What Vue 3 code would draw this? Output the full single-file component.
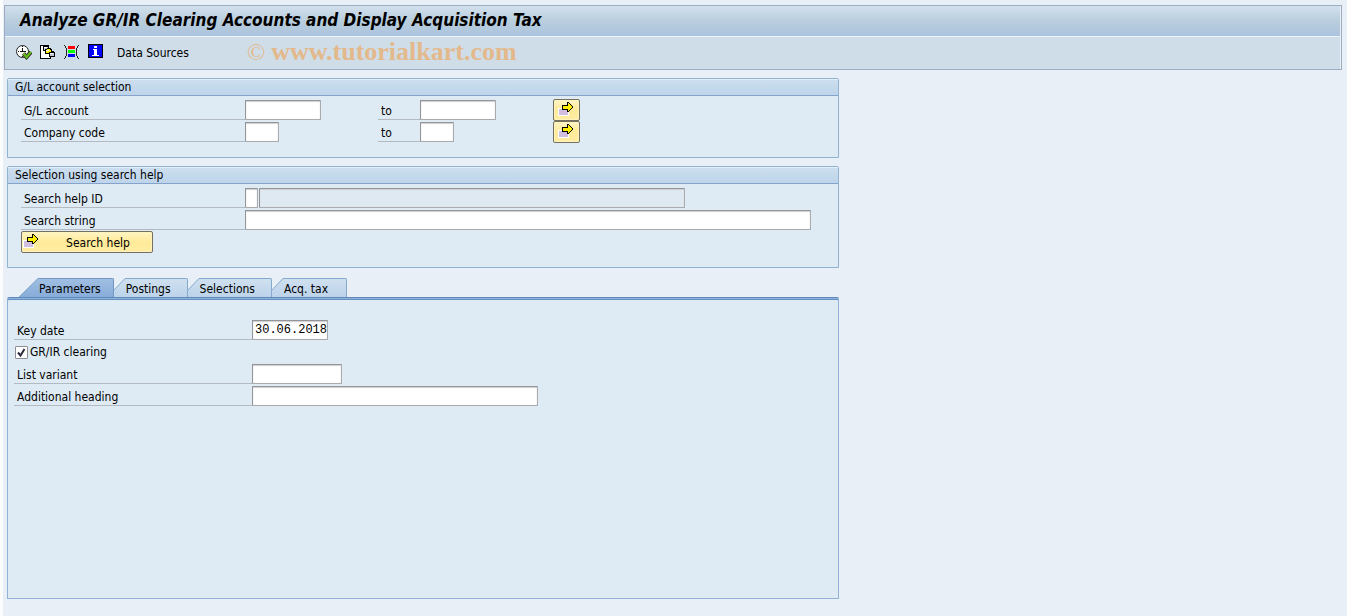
<script setup>
import { ref } from 'vue'

const ranges = [
  { id: 'account', label: 'G/L account', size: 'w-date' },
  { id: 'company', label: 'Company code', size: 'w-code' },
]
const tabs = ['Parameters', 'Postings', 'Selections', 'Acq. tax']
const active = ref('Parameters')
const keyDate = ref('30.06.2018')
const clearing = ref(true)
</script>

<template>
  <main class="screen">
    <header class="header">
      <h1 class="title">Analyze GR/IR Clearing Accounts and Display Acquisition Tax</h1>
      <div class="toolbar">
        <button class="tool" type="button" aria-label="Execute">
          <svg viewBox="0 0 16 16">
            <circle cx="6.5" cy="7.5" r="6" fill="#fff" stroke="#222" />
            <path d="M6.5 4v4M4 7.5h6M6.5 2v1M2 7.5h1M6.5 12v1" stroke="#111" fill="none" />
            <path d="M7.5 9.5l3 3.5 4.5-5" fill="none" stroke="#222" stroke-width="4" />
            <path d="M7.5 9.5l3 3.5 4.5-5" fill="none" stroke="#66b71e" stroke-width="2.5" />
          </svg>
        </button>
        <button class="tool" type="button" aria-label="Get variant">
          <svg viewBox="0 0 16 16" shape-rendering="crispEdges">
            <path d="M0 1h9v3h2v11H0z" fill="#000" />
            <path d="M1 2h8v2h1v10H1z" fill="#fff" />
            <path d="M3 2h2V1h3v1h1v5H3z" fill="#000" />
            <path d="M4 3h4v3H4z" fill="#bec6d2" />
            <path d="M5 5h2V4h4v1h1v5H5z" fill="#000" />
            <path d="M6 6h5v3H6zM7 5h3v1H7z" fill="#ffed00" />
            <path d="M9 8h2V7h3v1h1v5H9z" fill="#000" />
            <path d="M10 9h4v3h-4z" fill="#bec6d2" />
            <path d="M4 3h3v1H4zM6 6h3v1H6zM10 9h3v1h-3z" fill="#fff" />
          </svg>
        </button>
        <button class="tool" type="button" aria-label="Dynamic selections">
          <svg viewBox="0 0 16 16" shape-rendering="crispEdges">
            <path d="M4 2h7v3H4z" fill="#f00" />
            <path d="M4 6h7v3H4z" fill="#0f0" />
            <path d="M4 10h7v3H4z" fill="#00f" />
            <path d="M0 1h1v1H0zM1 2h1v2H1zM2 4h1v8H2zM1 12h1v2H1zM0 14h1v1H0zM14 1h1v1h-1zM13 2h1v2h-1zM12 4h1v8h-1zM13 12h1v2h-1zM14 14h1v1h-1z" fill="#222" />
          </svg>
        </button>
        <button class="tool" type="button" aria-label="Information">
          <svg viewBox="0 0 16 16" shape-rendering="crispEdges">
            <path d="M0 0h15v14H0z" fill="#000" />
            <path d="M1 1h13v12H1z" fill="#00f" />
            <path d="M6 2h3v2H6zM5 5h4v6h2v1H4v-1h2V6H5z" fill="#fff" />
          </svg>
        </button>
        <button class="sources" type="button">Data Sources</button>
        <span class="watermark">© <b>www.tutorialkart.com</b></span>
      </div>
    </header>

    <section class="group">
      <h2 class="group-title">G/L account selection</h2>
      <div v-for="r in ranges" :key="r.id" class="row range">
        <label class="label" :for="r.id">{{ r.label }}</label>
        <input :id="r.id" class="field" :class="r.size" type="text" />
        <label class="label" :for="r.id + '-to'">to</label>
        <input :id="r.id + '-to'" class="field" :class="r.size" type="text" />
        <button class="push multi" type="button" :aria-label="'Multiple selection for ' + r.label">
          <svg class="arrow" viewBox="0 0 16 16" shape-rendering="crispEdges">
            <path d="M0 7h11v8H0z" fill="#fff" />
            <path d="M1 8h9v6H1z" fill="#d2bede" />
            <path d="M4 4h5V1h2v1h1v1h1v1h1v1h1v2h-1v1h-1v1h-1v1h-1v1H9V9H4z" fill="#000" />
            <path d="M5 5h5V2h1v1h1v1h1v1h1v2h-1v1h-1v1h-1v1h-1V8H5z" fill="#ffed00" />
          </svg>
        </button>
      </div>
    </section>

    <section class="group">
      <h2 class="group-title">Selection using search help</h2>
      <div class="row">
        <label class="label" for="help-id">Search help ID</label>
        <input id="help-id" class="field w-one" type="text" />
        <input class="field w-desc" type="text" readonly aria-label="Search help description" />
      </div>
      <div class="row">
        <label class="label" for="string">Search string</label>
        <input id="string" class="field w-string" type="text" />
      </div>
      <button class="push help" type="button">
        <svg class="arrow" viewBox="0 0 16 16" shape-rendering="crispEdges">
          <path d="M0 7h11v8H0z" fill="#fff" />
          <path d="M1 8h9v6H1z" fill="#d2bede" />
          <path d="M4 4h5V1h2v1h1v1h1v1h1v1h1v2h-1v1h-1v1h-1v1h-1v1H9V9H4z" fill="#000" />
          <path d="M5 5h5V2h1v1h1v1h1v1h1v2h-1v1h-1v1h-1v1h-1V8H5z" fill="#ffed00" />
        </svg>
        <span class="help-text">Search help</span>
      </button>
    </section>

    <section class="tabstrip">
      <div class="tabs" role="tablist">
        <button
          v-for="t in tabs"
          :key="t"
          class="tab"
          :class="{ active: t === active }"
          type="button"
          role="tab"
          :aria-selected="t === active"
          @click="active = t"
        >
          <svg v-if="t === active" class="slope" viewBox="0 0 20 19">
            <defs>
              <linearGradient id="tab-on" x2="0" y2="1">
                <stop stop-color="#a0bee2" />
                <stop offset="1" stop-color="#87add9" />
              </linearGradient>
            </defs>
            <path d="M0 19L19 0h1v19z" fill="url(#tab-on)" />
            <path class="slope-line" d="M0 19L19 .5h1" />
          </svg>
          <svg v-else class="slope" viewBox="0 0 12 19">
            <defs>
              <linearGradient id="tab-off" x2="0" y2="1">
                <stop stop-color="#cfe0ef" />
                <stop offset="1" stop-color="#bcd3ea" />
              </linearGradient>
            </defs>
            <path d="M0 12L11 0h1v19H0z" fill="url(#tab-off)" />
            <path class="slope-line" d="M0 12L11 .5h1" />
          </svg>
          <span class="tab-text">{{ t }}</span>
        </button>
      </div>
      <div class="panel" role="tabpanel">
        <div class="row">
          <label class="label" for="key-date">Key date</label>
          <input id="key-date" v-model="keyDate" class="field w-date" type="text" />
        </div>
        <div class="row">
          <span class="check">
            <span class="box">
              <input id="clearing" v-model="clearing" type="checkbox" />
              <svg v-if="clearing" class="mark" viewBox="0 0 13 13">
                <path d="M3 6.5l2.500 3L9.500 3" fill="none" stroke="#2b2b3c" stroke-width="2" />
              </svg>
            </span>
            <label for="clearing">GR/IR clearing</label>
          </span>
        </div>
        <div class="row">
          <label class="label" for="variant">List variant</label>
          <input id="variant" class="field w-variant" type="text" />
        </div>
        <div class="row">
          <label class="label" for="heading">Additional heading</label>
          <input id="heading" class="field w-heading" type="text" />
        </div>
      </div>
    </section>
  </main>
</template>

<style>
body {
  margin: 0;
  background: #e8eff7;
}
</style>

<style scoped>
.screen,
.screen * {
  box-sizing: border-box;
}
.screen {
  min-height: 100vh;
  padding: 5px 5px 17px 4px;
  border-left: 3px solid #fbfcfe;
  background: #e8eff7;
  color: #000;
  font: 12px/18px "DejaVu Sans Condensed", "DejaVu Sans", sans-serif;
}
.screen button {
  font: inherit;
  color: inherit;
  cursor: pointer;
}
.header {
  margin: 0 0 8px -3px;
  border: 1px solid #9eacc2;
  box-shadow: inset -1px 1px #e8eff6;
  background: #cfdde8;
}
.title {
  height: 31px;
  margin: 0 1px 0 0;
  padding: 0 15px;
  border-bottom: 1px solid #edf3f8;
  background: linear-gradient(#d2e0ed, #b9cedd 50%, #abc3de);
  font-size: 17px;
  line-height: 28px;
  font-style: italic;
  font-weight: bold;
  white-space: nowrap;
}
.toolbar {
  display: flex;
  align-items: center;
  height: 32px;
  padding: 0 0 2px 11px;
}
.tool {
  width: 16px;
  height: 16px;
  margin-right: 8px;
  padding: 0;
  border: 0;
  background: none;
}
.tool svg {
  display: block;
  width: 16px;
  height: 16px;
}
.screen .sources {
  margin-left: 5px;
  padding: 2px 0 0;
  border: 0;
  background: none;
  line-height: 20px;
}
.watermark {
  margin-left: 58px;
  color: #e3b98c;
  font: 24px/28px "Liberation Serif", serif;
  white-space: nowrap;
}
.watermark b {
  font-size: 26px;
}
.group {
  max-width: 832px;
  margin-bottom: 8px;
  padding: 0 0 14px 13px;
  border: 1px solid #8fb2d0;
  border-radius: 2px 2px 0 0;
  background: #deebf5;
}
.group-title {
  height: 17px;
  margin: 0 0 3px -13px;
  padding-left: 7px;
  border-bottom: 1px solid #86a4cb;
  box-shadow: inset 0 1px #e4f0f9;
  background: linear-gradient(#cddff0, #bed4ea);
  font-size: 12px;
  font-weight: normal;
  line-height: 16px;
}
.row {
  display: flex;
  height: 22px;
  padding: 1px 0;
}
.range {
  display: grid;
  grid-template-columns: 224px 133px 42px 133px 27px;
  padding: 0;
  align-items: center;
}
.label {
  flex: none;
  width: 224px;
  height: 20px;
  padding: 1px 3px 0;
  border-bottom: 1px solid #b3bac1;
  line-height: 20px;
}
.range .label {
  width: auto;
}
.field {
  flex: none;
  height: 20px;
  padding: 0 0 0 2px;
  border: 1px solid #a9abae;
  border-top-color: #939598;
  border-left-color: #939598;
  border-radius: 1px;
  box-shadow: inset 0 1px 1px #cfcfd2, inset 0 0 1px #d5d5d8;
  background: #fff;
  color: #000;
  font: 12px "Liberation Mono", "DejaVu Sans Mono", monospace;
  outline: 0;
}
.field:read-only {
  background: #dfe9f2;
}
.w-one {
  width: 13px;
  margin-right: 1px;
}
.w-code {
  width: 34px;
}
.w-date {
  width: 76px;
}
.w-variant {
  width: 90px;
}
.w-heading {
  width: 286px;
}
.w-desc {
  width: 426px;
}
.w-string {
  width: 566px;
}
.push {
  display: flex;
  height: 22px;
  padding: 0;
  border: 1px solid #75705f;
  border-radius: 2px;
  box-shadow: inset 0 0 0 1px #fff3bd;
  background: linear-gradient(#fff5c5, #ffea98 50%, #ffeda2);
}
.arrow {
  flex: none;
  width: 16px;
  height: 16px;
}
.multi {
  width: 27px;
  padding: 1px 0 0 4px;
}
.help {
  width: 132px;
  padding: 1px 0 0 1px;
}
.help-text {
  flex: 1;
  padding-left: 5px;
  line-height: 20px;
}
.tabstrip {
  max-width: 832px;
  padding-top: 2px;
}
.tabs {
  display: flex;
  padding-left: 12px;
}
.tab {
  display: flex;
  height: 19px;
  padding: 0;
  border: 0;
  background: none;
}
.slope {
  width: 12px;
  height: 19px;
}
.active .slope {
  width: 20px;
}
.slope-line {
  fill: none;
  stroke: #86aace;
}
.tab-text {
  height: 19px;
  padding: 1px 16px 0 0;
  border: solid #86aace;
  border-width: 1px 1px 0 0;
  border-radius: 0 2px 0 0;
  background: linear-gradient(#cfe0ef, #bcd3ea);
}
.active .tab-text {
  padding-right: 12px;
  border-color: #6f96c2;
  background: linear-gradient(#a0bee2, #87add9);
}
.tab:last-child .tab-text {
  padding-right: 18px;
}
.panel {
  min-height: 302px;
  padding: 21px 6px;
  border: 1px solid #8fb2d6;
  border-top-color: #5f88b8;
  border-radius: 2px 2px 0 0;
  box-shadow: inset 0 1px #8fb4df, inset 0 2px #6490c0;
  background: #deebf5;
}
.panel .label {
  width: 238px;
}
.check {
  display: flex;
  align-items: center;
  gap: 2px;
  line-height: 22px;
}
.box {
  position: relative;
  width: 13px;
  height: 13px;
  margin-left: 1px;
}
.box input {
  display: block;
  width: 13px;
  height: 13px;
  margin: 0;
  border: 1px solid #8c8e91;
  border-radius: 1px;
  background: #fff;
  appearance: none;
}
.mark {
  position: absolute;
  inset: 0;
  pointer-events: none;
}
</style>
